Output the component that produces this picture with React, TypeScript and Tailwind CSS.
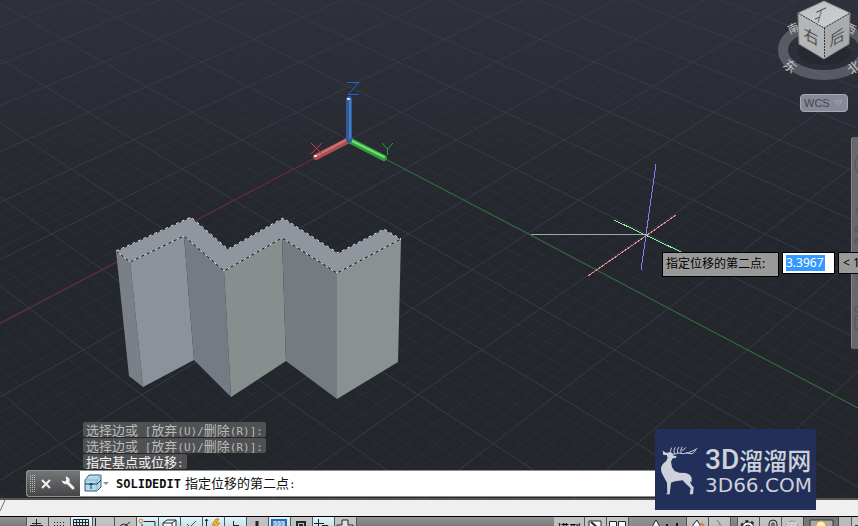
import type { ReactNode } from "react";

const sans = "font-['Noto_Sans','Noto_Sans_CJK_SC',sans-serif]";
const mono = "font-['DejaVu_Sans_Mono','Noto_Sans_CJK_SC',monospace]";

// Projects a ground-plane point (units of one major grid cell) to the viewport.
function project(i: number, j: number): [number, number] {
  const w = 1 / (0.01859 - 0.000588 * (i + j));
  return [349 + (i - j) * w, 140 + 16.67 * (w - 53.8)];
}

function gridPath(major: boolean) {
  let d = "";
  for (let n = -65; n <= 75; n++) {
    if ((n % 5 === 0) !== major) continue;
    const k = n / 5;
    const a = project(k, -11 - k);
    const b = project(k, 12 - k);
    const c = project(-11 - k, k);
    const e = project(12 - k, k);
    d += `M${a[0]} ${a[1]}L${b[0]} ${b[1]}M${c[0]} ${c[1]}L${e[0]} ${e[1]}`;
  }
  return d;
}

const minorGrid = gridPath(false);
const majorGrid = gridPath(true);
const topFace =
  "M116 251L191 217L228 249L283 218L338 253L384 229L401 239L337 273L282 238L224 271L184 236L130 262Z";

function Scene() {
  return (
    <svg
      className="absolute inset-0 h-full w-full"
      viewBox="0 0 858 498"
      preserveAspectRatio="xMinYMin slice"
      role="img"
      aria-label="3D model view"
    >
      <defs>
        <linearGradient id="sky" x1="0" y1="0" x2="0" y2="1">
          <stop offset="0" stopColor="#2e313a" />
          <stop offset="0.45" stopColor="#24272d" />
          <stop offset="1" stopColor="#23272c" />
        </linearGradient>
        <linearGradient id="cubeTop" x1="0" y1="0" x2="1" y2="1">
          <stop offset="0" stopColor="#bcbec0" />
          <stop offset="1" stopColor="#cfd0d1" />
        </linearGradient>
      </defs>
      <rect width="858" height="498" fill="url(#sky)" />
      <path d={minorGrid} stroke="#2f333d" strokeOpacity="0.6" fill="none" />
      <path d={majorGrid} stroke="#373b47" fill="none" />

      <path d="M349 140L0 323" stroke="#712832" fill="none" />
      <path d="M349 140L529 234L670 309L858 408" stroke="#2e7439" fill="none" />

      <g strokeLinecap="round" fill="none">
        <path d="M349 140L316 157" stroke="#a84d50" strokeWidth="6" />
        <path d="M348 139L316 156" stroke="#d07070" strokeWidth="2" />
        <path d="M349 140L384 158" stroke="#319c38" strokeWidth="6" />
        <path d="M350 140L384 157" stroke="#78dc78" strokeWidth="2" />
        <path d="M349 140V99" stroke="#315b98" strokeWidth="6" />
        <path d="M350 138V99" stroke="#477cc0" strokeWidth="2" />
        <path d="M348 99h1M315 156h1" stroke="#e3edf7" strokeWidth="2" />
      </g>
      <path d="M347 82.500H359L348 94.500H359" stroke="#2462d4" fill="none" />
      <path d="M311 143L322 154M322 143L311 154" stroke="#d92f39" fill="none" />
      <path d="M382 143L387.500 149L393 143M387.500 149V155" stroke="#279d37" fill="none" />

      <path d="M116 251L130 261L143 387L129 376Z" fill="#798087" />
      <path d="M130 261L184 236L194 360L143 387Z" fill="#8b9299" />
      <path d="M184 236L224 271L231 397L194 360Z" fill="#747b82" />
      <path d="M224 271L282 238L286 361L231 397Z" fill="#868e8e" />
      <path d="M282 238L337 273L337 399L286 361Z" fill="#747b81" />
      <path d="M337 273L401 239L398 362L337 399Z" fill="#8a9192" />
      <path d={topFace} fill="#8f969d" stroke="#16191e" />
      <path d={topFace} fill="none" stroke="#e8eaec" strokeDasharray="3 3" />

      <g fill="none" shapeRendering="crispEdges">
        <path d="M531 234.500H646" stroke="#a2a8a8" />
        <path d="M588 276L676 215" stroke="#e38b8e" />
        <path d="M614 220L681 252" stroke="#8df09a" />
        <path d="M656 164L641 270" stroke="#8280e6" />
      </g>

      <ellipse cx="824" cy="50" rx="41" ry="25" fill="none" stroke="#7c7f86" strokeOpacity="0.55" strokeWidth="10" />
      <g className="font-['Noto_Sans_CJK_SC',sans-serif]" fill="#c3c5c9" fontSize="13" textAnchor="middle">
        <text transform="translate(787 70) rotate(40)">东</text>
        <text transform="translate(795 32) rotate(-25)" fontSize="11">南</text>
        <text transform="translate(849 32) rotate(25)" fontSize="11">西</text>
        <text transform="translate(857 71) rotate(-40)">北</text>
      </g>
      <ellipse cx="824" cy="53" rx="27" ry="12" fill="#23262d" fillOpacity="0.7" />
      <path d="M824 1L850 13L824 28L798 13Z" fill="url(#cubeTop)" />
      <path d="M798 13L824 28V59L799 44Z" fill="#b3b5b7" />
      <path d="M850 13L824 28V59L849 44Z" fill="#a9abad" />
      <path d="M798 13L824 28L850 13M824.500 28V59" fill="none" stroke="#33363a" strokeDasharray="2 1" />
      <path d="M798 13L824 1L850 13L849 44L824 59L799 44Z" fill="none" stroke="#85888c" />
      <g className="font-['Noto_Sans_CJK_SC',sans-serif]" fill="#4c4f54" textAnchor="middle">
        <text transform="translate(811 42) skewY(28)" fontSize="15">右</text>
        <text transform="translate(837 43) skewY(-28)" fontSize="15">后</text>
        <text transform="translate(821 10) rotate(155) skewX(-40)" fontSize="12">上</text>
      </g>
    </svg>
  );
}

// Command text: ideographs are set a little larger than the fixed-width Latin characters.
function Prompt({ text }: { text: string }) {
  return (
    <>
      {text.split(/([\u4e00-\u9fff]+)/).map((part, n) => (
        <span key={n} className={/[\u4e00-\u9fff]/.test(part) ? "text-[13px]" : "text-[11px]"}>
          {part}
        </span>
      ))}
    </>
  );
}

function HistoryLine({ text, bright = false }: { text: string; bright?: boolean }) {
  return (
    <li
      className={`h-[15px] whitespace-pre rounded-[2px] bg-[#505153] px-[3px] leading-[15px] ${mono} ${bright ? "text-[#f2f2f2]" : "text-[#b9babb]"}`}
    >
      <Prompt text={text} />
    </li>
  );
}

function Deer() {
  return (
    <svg viewBox="60 65 114 150" className="h-[50px] w-[38px] shrink-0" aria-hidden="true">
      <path
        fill="#cdd1da"
        d="M68 82L80 89L88 86L97 91L101 97L109 98L108 104L98 105L93 115L96 132L104 143L118 148L137 149Q151 153 155 163L155 176L150 174L154 184L161 192L159 213L149 213L152 195L136 180L128 171L105 174L93 178L89 213L78 213L82 208L81 178L70 158Q62 147 63 135Q65 123 78 114L83 104L80 95L70 95Z"
      />
      <g fill="none" stroke="#cdd1da" strokeWidth="3" strokeLinecap="round">
        <path d="M94 92Q88 85 94 74M94 90Q100 96 116 89Q130 94 145 88Q160 83 171 76M103 91Q99 80 105 73M113 89Q109 81 116 72M123 89Q120 80 126 71M127 81Q133 80 137 73M140 88Q146 92 157 91Q164 87 166 81" />
      </g>
    </svg>
  );
}

function Tool({ label, active = false, children }: { label: string; active?: boolean; children?: ReactNode }) {
  return (
    <button
      type="button"
      aria-label={label}
      className={`h-6 w-[22px] shrink-0 border-l border-[#55585a] ${active ? "bg-linear-to-b from-[#e2f5f8] to-[#8fc6d4]" : "bg-linear-to-b from-[#c5c5c5] to-[#b2b2b2]"}`}
    >
      <svg viewBox="0 0 21 24" className="h-6 w-[21px]" fill="none" stroke="#22272c" aria-hidden="true">
        {children}
      </svg>
    </button>
  );
}

function StatusBar() {
  return (
    <footer className="flex h-[10px] shrink-0 overflow-hidden border-t border-black bg-linear-to-b from-[#929292] to-[#7b7b7b]">
      <div className="w-[26px] shrink-0" />
      <Tool label="Infer constraints">
        <path d="M9.500 2V15M5 6.500H14" />
        <path d="M3 9H16" strokeWidth="2" />
      </Tool>
      <Tool label="Snap">
        <path d="M5 5.500H16M5 8.500H16M5 11.500H16" strokeDasharray="1 2" />
      </Tool>
      <Tool label="Grid" active>
        <path d="M2.500 2.500H17.500V14H2.500ZM2 5.500H18M2 8.500H18M5.500 2V14M8.500 2V14M11.500 2V14M14.500 2V14" />
      </Tool>
      <Tool label="Ortho">
        <path d="M2.500 1V15H18" />
      </Tool>
      <Tool label="Polar">
        <circle cx="9" cy="11" r="4" />
        <path d="M5 13L15 5" />
      </Tool>
      <Tool label="Object snap" active>
        <path d="M7 4.500H18V16H5V7" />
        <circle cx="4" cy="4" r="2" stroke="#d47639" />
      </Tool>
      <Tool label="3D object snap" active>
        <path d="M4 15V6L8 3H17V12L13 15ZM4 6H13V15M13 6L17 3" fill="#f6f9fb" />
      </Tool>
      <Tool label="Tracking" active>
        <path d="M6 7L9 10L15 4" stroke="#315363" />
      </Tool>
      <Tool label="Dynamic UCS" active>
        <path d="M3.500 2V16M2 4L3.500 2L5 4" />
        <path d="M13 2L9 8H12L10 13L17 6H13L16 2Z" fill="#f5b72d" stroke="#c98318" />
      </Tool>
      <Tool label="Dynamic input" active>
        <path d="M8.500 4V12M8 8.500H14" />
      </Tool>
      <Tool label="Lineweight">
        <path d="M10 4V15" strokeWidth="3" />
      </Tool>
      <Tool label="Transparency" active>
        <path d="M3 3H17V15H3Z" fill="#7eb0db" stroke="#2f6cb8" strokeWidth="2" />
        <path d="M5 5H16M6 7H16M5 9H16" stroke="#d7ebf7" strokeDasharray="2 2" />
      </Tool>
      <Tool label="Quick properties">
        <path d="M6 5H14V15H6ZM8 8H12" strokeWidth="2" />
      </Tool>
      <Tool label="Selection cycling" active>
        <path d="M5.500 2V12M1 6.500H11M9 8.500H15V15H9" />
      </Tool>
      <Tool label="Annotation monitor">
        <path d="M7 3H13V8H18V13H2V8H7Z" fill="#e0e0e0" />
      </Tool>
      <div className="min-w-0 flex-1 border-l border-[#55585a]" />
      <button type="button" className={`h-6 w-[30px] shrink-0 bg-[#c0c0c0] pt-[2px] text-[12px] font-medium leading-[18px] text-black ${sans}`}>
        模型
      </button>
      <Tool label="Layout">
        <path d="M4 4H16V15H4Z" fill="#f8f8f8" />
        <path d="M6 5L13 11" strokeWidth="2" />
      </Tool>
      <Tool label="Quick view">
        <path d="M2.500 4.500H9.500V15H2.500ZM11.500 4.500H18.500V15H11.500Z" fill="#f8f8f8" />
      </Tool>
      <button type="button" className="flex h-6 w-[58px] shrink-0 border-l border-[#55585a] bg-linear-to-b from-[#929292] to-[#7b7b7b] pl-[19px]" aria-label="Annotation scale">
        <svg viewBox="0 0 35 24" className="h-6 w-[35px]" aria-hidden="true">
          <path d="M8 3L11 8V14H5V8Z" fill="#f3f3f3" stroke="#26292d" />
          <path d="M19 7V13M29 6V13" stroke="#17191c" strokeWidth="2" />
        </svg>
      </button>
      <Tool label="Annotation visibility">
        <path d="M10 3L13 8V14H6V8Z" fill="#f5f5f5" />
        <path d="M14 6L17 9" stroke="#d77d35" strokeWidth="2" />
      </Tool>
      <Tool label="Auto scale">
        <path d="M8 3L12 8V14H5L11 7Z" fill="#d4d4d4" stroke="#898989" />
      </Tool>
      <div className="w-[7px] shrink-0 border-l border-[#55585a]" />
      <Tool label="Workspace">
        <circle cx="10" cy="11" r="6" fill="#f2f2f2" />
        <circle cx="10" cy="11" r="7" strokeWidth="2" strokeDasharray="3 3" />
        <circle cx="10" cy="11" r="3" />
      </Tool>
      <Tool label="Lock toolbars">
        <path d="M9 14V7A4 4 0 0 1 17 7V14M12 14V7A1 1 0 0 1 14 7V14" />
      </Tool>
      <Tool label="Hardware acceleration">
        <circle cx="10" cy="10" r="6" fill="#c3c3c3" stroke="#959595" />
        <path d="M5 6H15M4 9H16" stroke="#f4f4f4" strokeDasharray="2 2" />
      </Tool>
      <button type="button" aria-label="Isolate objects" className="h-6 w-[36px] shrink-0 border-x border-[#44474a] bg-[#777777]">
        <svg viewBox="0 0 34 24" className="h-6 w-[34px]" aria-hidden="true">
          <path d="M6 20V3H29V20" fill="#aaa9a4" stroke="#333538" />
          <circle cx="17" cy="9" r="5" fill="#ffefac" stroke="#b79b4d" />
        </svg>
      </button>
      <div className="w-[12px] shrink-0 bg-[#bbbbbb]" />
      <button type="button" aria-label="Clean screen" className="h-6 w-[7px] shrink-0 border-l border-[#55585a] bg-[#c5c5c5] pl-[3px] pt-[3px]">
        <span className="block h-3 w-[3px] border-l border-t-2 border-[#34373b] bg-white" />
      </button>
    </footer>
  );
}

export default function App() {
  return (
    <div className="flex h-screen flex-col overflow-hidden bg-[#efefef]">
      <main className="relative min-h-0 flex-1 overflow-hidden">
        <Scene />

        <button
          type="button"
          className="absolute right-[10px] top-[94px] flex h-[18px] w-[48px] items-center justify-between rounded-[4px] border border-[#a7aab5] bg-[#878a96] pl-[3px] pr-[4px] font-['Liberation_Sans',sans-serif] text-[11px] text-[#444751]"
        >
          WCS
          <svg viewBox="0 0 9 6" className="h-[6px] w-[9px]" aria-hidden="true">
            <path d="M1 1H8L4.500 5Z" fill="#878a96" stroke="#a2a5af" />
          </svg>
        </button>

        <nav aria-label="Navigation bar" className="absolute right-0 top-[137px] h-[212px] w-[7px] rounded-l-[3px] border-l border-[#83868a] bg-[#65686c]">
          <svg viewBox="0 0 6 212" className="h-[212px] w-[6px]" fill="none" stroke="#505358" aria-hidden="true">
            <path d="M6 18Q0 28 6 36M6 71Q2 74 6 77M3 90H6V94H3ZM3 102H6V106H3ZM6 138Q2 141 6 144M3 170H6M3 170V175H6M3 179H6M3 179V192H6" />
          </svg>
        </nav>

        <div className={`absolute left-[662px] top-[252px] flex items-start text-[12px] text-black ${sans}`}>
          <label htmlFor="offset" className="h-[25px] w-[117px] whitespace-nowrap border border-black bg-[#999999] px-[3px] leading-[22px]">
            指定位移的第二点:
          </label>
          <div className="ml-[3px] flex h-[22px] w-[53px] border border-black bg-white px-[3px] py-[2px]">
            <input
              id="offset"
              defaultValue="3.3967"
              className="h-4 w-[39px] bg-[#3399ff] text-[12px] leading-4 text-white outline-none"
            />
          </div>
          <output className="ml-[3px] h-[22px] w-[40px] whitespace-pre border border-black bg-[#999999] px-[4px] leading-5">{"< 1"}</output>
        </div>

        <div className="relative flex h-full flex-col justify-end pb-[1px]">
          <ul className="mb-[1px] ml-[83px] flex flex-col items-start gap-[1px]">
            <HistoryLine text="选择边或 [放弃(U)/删除(R)]:" />
            <HistoryLine text="选择边或 [放弃(U)/删除(R)]:" />
            <HistoryLine text="指定基点或位移:" bright />
          </ul>
          <div className="ml-[26px] mr-[60px] flex h-[27px] overflow-hidden rounded-l-[3px] border border-[#8e8f90] bg-white">
            <div className="flex w-[53px] shrink-0 items-center bg-linear-to-b from-[#757677] to-[#454647]">
              <svg viewBox="0 0 53 25" className="h-[25px] w-[53px]" fill="none" aria-hidden="true">
                <path d="M3.500 4V21M5.500 4V21M7.500 4V21" stroke="#bfc0c0" strokeDasharray="1 1" />
                <path d="M15 9L23 17M23 9L15 17" stroke="#f1f1f1" strokeWidth="2" />
                <path d="M40 11L46 17" stroke="#f1f1f1" strokeWidth="3" strokeLinecap="round" />
                <path d="M39 6L40 9L38 11L35 10Q36 13 40 13Q43 11 42 8Q41 6 39 6" fill="#f1f1f1" stroke="#f1f1f1" />
              </svg>
            </div>
            <svg viewBox="0 0 30 25" className="h-[25px] w-[30px] shrink-0" fill="none" aria-hidden="true">
              <path d="M5 9L9 4H21V16L17 20H5Z" fill="#b4d9ed" stroke="#315c7d" />
              <path d="M5 9H17V20M17 9L21 4" stroke="#86b2cd" />
              <path d="M5 13H17L21 9M11 18V12M9 14L11 12L13 14" stroke="#183b54" />
              <path d="M23 11H29L26 14Z" fill="#898d91" />
            </svg>
            <label htmlFor="command" className={`flex items-center gap-[4px] whitespace-nowrap pl-[6px] text-[#111111] ${mono}`}>
              <strong className="text-[12px]">SOLIDEDIT</strong>
              <span className="leading-[18px]">
                <Prompt text="指定位移的第二点:" />
              </span>
            </label>
            <input id="command" aria-label="Command" className="min-w-0 flex-1 bg-white outline-none" />
          </div>
        </div>
      </main>

      <div className="relative h-[18px] shrink-0 border-t-2 border-[#555658] bg-[#efefef]">
        <svg viewBox="0 0 6 14" className="h-[14px] w-[6px]" fill="none" aria-hidden="true">
          <path d="M5 0L1 9L0 11" stroke="#6f7071" />
        </svg>
        <aside className="absolute bottom-[6px] right-[42px] flex h-[81px] w-[161px] items-center gap-[7px] bg-[#222f58] pl-[5px] text-[#cdd1da]">
          <Deer />
          <div className="whitespace-nowrap">
            <div className="flex h-[30px] items-center">
              <span className="font-['Roboto',sans-serif] text-[28px] font-medium leading-[30px]">3D</span>
              <span className="font-['Noto_Sans_CJK_SC',sans-serif] text-[24px] font-medium leading-[30px]">溜溜网</span>
            </div>
            <div className="h-[20px] font-['DejaVu_Sans',sans-serif] text-[20px] leading-[20px]">3D66.COM</div>
          </div>
        </aside>
      </div>
      <StatusBar />
    </div>
  );
}
